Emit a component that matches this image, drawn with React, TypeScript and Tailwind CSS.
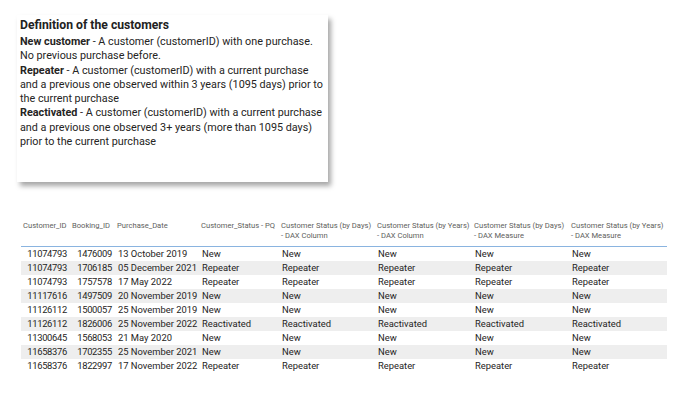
const headers = [
  { label: "Customer_ID" },
  { label: "Booking_ID" },
  { label: "Purchase_Date" },
  { label: "Customer_Status - PQ" },
  { label: "Customer Status (by Days)", sub: "- DAX Column" },
  { label: "Customer Status (by Years)", sub: "- DAX Column" },
  { label: "Customer Status (by Days)", sub: "- DAX Measure" },
  { label: "Customer Status (by Years)", sub: "- DAX Measure" },
];

const rows: [string, string, string, string][] = [
  ["11074793", "1476009", "13 October 2019", "New"],
  ["11074793", "1706185", "05 December 2021", "Repeater"],
  ["11074793", "1757578", "17 May 2022", "Repeater"],
  ["11117616", "1497509", "20 November 2019", "New"],
  ["11126112", "1500057", "25 November 2019", "New"],
  ["11126112", "1826006", "25 November 2022", "Reactivated"],
  ["11300645", "1568053", "21 May 2020", "New"],
  ["11658376", "1702355", "25 November 2021", "New"],
  ["11658376", "1822997", "17 November 2022", "Repeater"],
];

const cols = "grid grid-cols-[49px_45px_84px_80px_96px_97px_97px_98px]";

function DefinitionCard() {
  return (
    <div className="ml-[17px] h-[167px] w-[311px] bg-white pl-[3px] pr-[2px] pt-[2px] font-['Roboto',sans-serif] shadow-[3px_4px_5px_rgba(0,0,0,0.35)]">
      <h2 className="text-[12.2px] font-bold leading-[17px] text-[#222]">Definition of the customers</h2>
      <div className="mt-[1px] text-[10.8px] leading-[14.3px] text-[#252423]">
        <p>
          <b>New customer</b> - A customer (customerID) with one purchase. No previous purchase before.
        </p>
        <p>
          <b>Repeater</b> - A customer (customerID) with a current purchase and a previous one observed within 3 years (1095 days) prior to the current purchase
        </p>
        <p>
          <b>Reactivated</b> - A customer (customerID) with a current purchase and a previous one observed 3+ years (more than 1095 days) prior to the current purchase
        </p>
      </div>
    </div>
  );
}

function CustomerTable() {
  return (
    <div className="ml-[21px] mt-[39px] w-[646px] font-['Roboto',sans-serif]">
      <div className={`${cols} border-b border-[#8ab4e0] pb-[5px] text-[7.6px] leading-[10px] text-[#605e5c]`}>
        {headers.map((h, i) => (
          <div key={i} className="whitespace-nowrap pl-[2px]">
            <div>{h.label}</div>
            {h.sub && <div>{h.sub}</div>}
          </div>
        ))}
      </div>
      <div className="text-[9.4px] leading-[14px] text-[#252423]">
        {rows.map((r, i) => (
          <div key={i} className={`${cols} ${i % 2 === 1 ? "bg-[#eeeeee]" : "bg-white"}`}>
            <div className="pr-[3px] text-right tracking-[-0.3px]">{r[0]}</div>
            <div className="pr-[3px] text-right tracking-[-0.3px]">{r[1]}</div>
            <div className="whitespace-nowrap pl-[3px]">{r[2]}</div>
            {[0, 1, 2, 3, 4].map((k) => (
              <div key={k} className="pl-[3px]">{r[3]}</div>
            ))}
          </div>
        ))}
      </div>
    </div>
  );
}

export default function App() {
  return (
    <div className="h-[399px] w-[690px] overflow-hidden bg-white pt-[15px]">
      <DefinitionCard />
      <CustomerTable />
    </div>
  );
}
